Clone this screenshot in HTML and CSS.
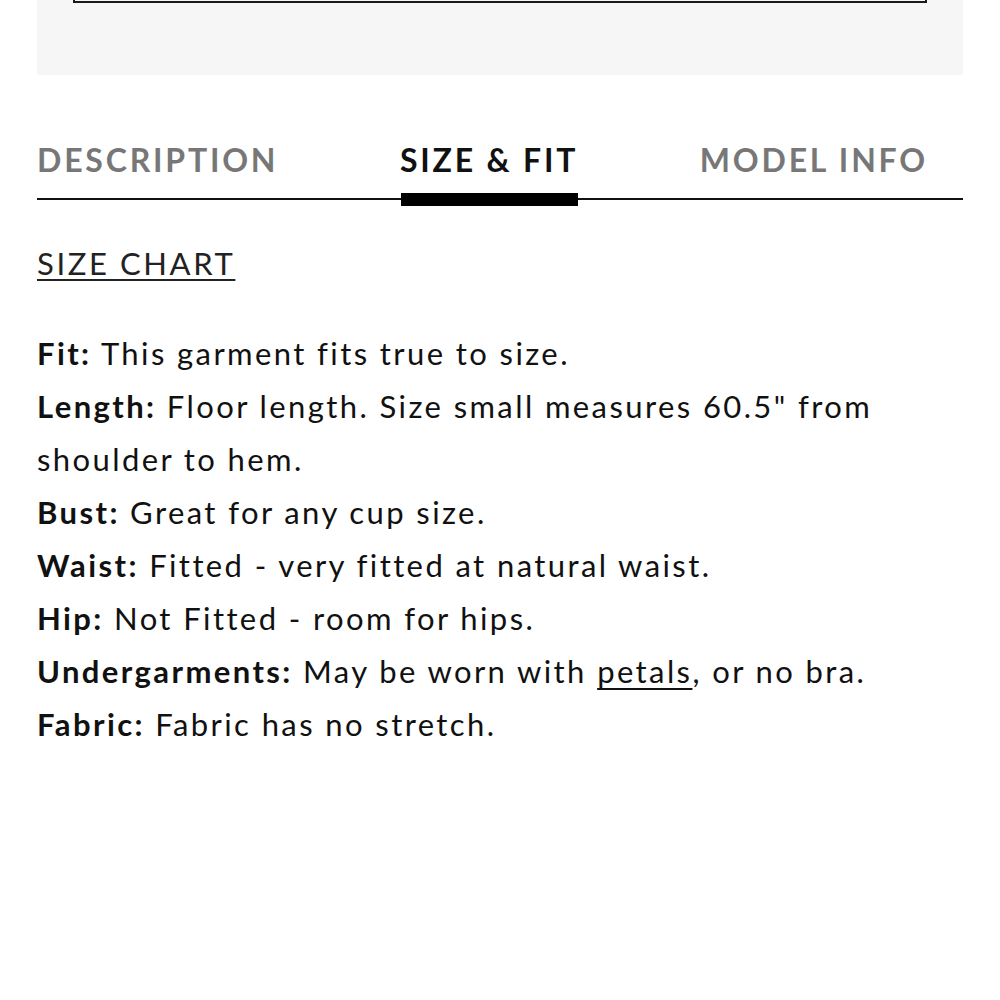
FILE: index.html
```html
<!DOCTYPE html>
<html lang="en">
<head>
    <meta charset="UTF-8">
    <meta name="viewport" content="width=device-width, initial-scale=1.0">
    <title>Size &amp; Fit</title>
    <link rel="stylesheet" href="styles.css">
</head>
<body>
    <div class="pdp-panel">
        <div class="pdp-panel-box"></div>
    </div>

    <div class="pdp-tabs">
        <a class="pdp-tab">DESCRIPTION</a>
        <a class="pdp-tab active">SIZE &amp; FIT</a>
        <a class="pdp-tab">MODEL INFO</a>
    </div>

    <div class="pdp-content">
        <a class="pdp-size-chart">SIZE CHART</a>
        <p class="pdp-fit-notes">
            <strong>Fit:</strong> This garment fits true to size.<br/>
            <strong>Length:</strong> Floor length. Size small measures 60.5" from shoulder to hem.<br/>
            <strong>Bust:</strong> Great for any cup size.<br/>
            <strong>Waist:</strong> Fitted - very fitted at natural waist.<br/>
            <strong>Hip:</strong> Not Fitted - room for hips.<br/>
            <strong>Undergarments:</strong> May be worn with <a class="pdp-link">petals</a>, or no bra.<br/>
            <strong>Fabric:</strong> Fabric has no stretch.
        </p>
    </div>
</body>
</html>
```

FILE: styles.css
```css
body {
    margin: 0;
    font-family: Lato, "Liberation Sans", sans-serif;
    color: #111;
    background: #fff;
}
.pdp-panel {
    margin: 0 37px;
    height: 75px;
    padding: 0 36px;
    background-color: #f6f6f6;
}
.pdp-panel-box {
    height: 3px;
    border: 2px solid #1a1a1a;
    border-top: 0;
    box-sizing: border-box;
}
.pdp-tabs {
    display: flex;
    justify-content: space-between;
    margin: 65px 37px 0;
    padding-right: 35px;
    border-bottom: 2px solid #111;
}
.pdp-tab {
    position: relative;
    padding-bottom: 18px;
    font-size: 32px;
    line-height: 40px;
    font-weight: 700;
    letter-spacing: 2.8px;
    color: #777;
    cursor: pointer;
}
.pdp-tab.active {
    color: #111;
}
.pdp-tab.active::after {
    content: "";
    position: absolute;
    left: 1px;
    right: 0;
    bottom: -8px;
    height: 13px;
    background-color: #000;
}
.pdp-content {
    margin: 0 37px;
    padding-top: 37px;
    font-size: 31px;
    line-height: 53px;
    letter-spacing: 2.4px;
}
.pdp-size-chart {
    display: block;
    color: #222;
    letter-spacing: 2.6px;
    text-decoration: underline;
    text-decoration-thickness: 2px;
    text-underline-offset: 4px;
    text-decoration-skip-ink: none;
}
.pdp-fit-notes {
    margin: 37px 0 0;
}
.pdp-fit-notes strong {
    font-weight: 700;
}
.pdp-link {
    color: inherit;
    text-decoration: underline;
    text-decoration-thickness: 2px;
    text-underline-offset: 5px;
    text-decoration-skip-ink: none;
}
```
